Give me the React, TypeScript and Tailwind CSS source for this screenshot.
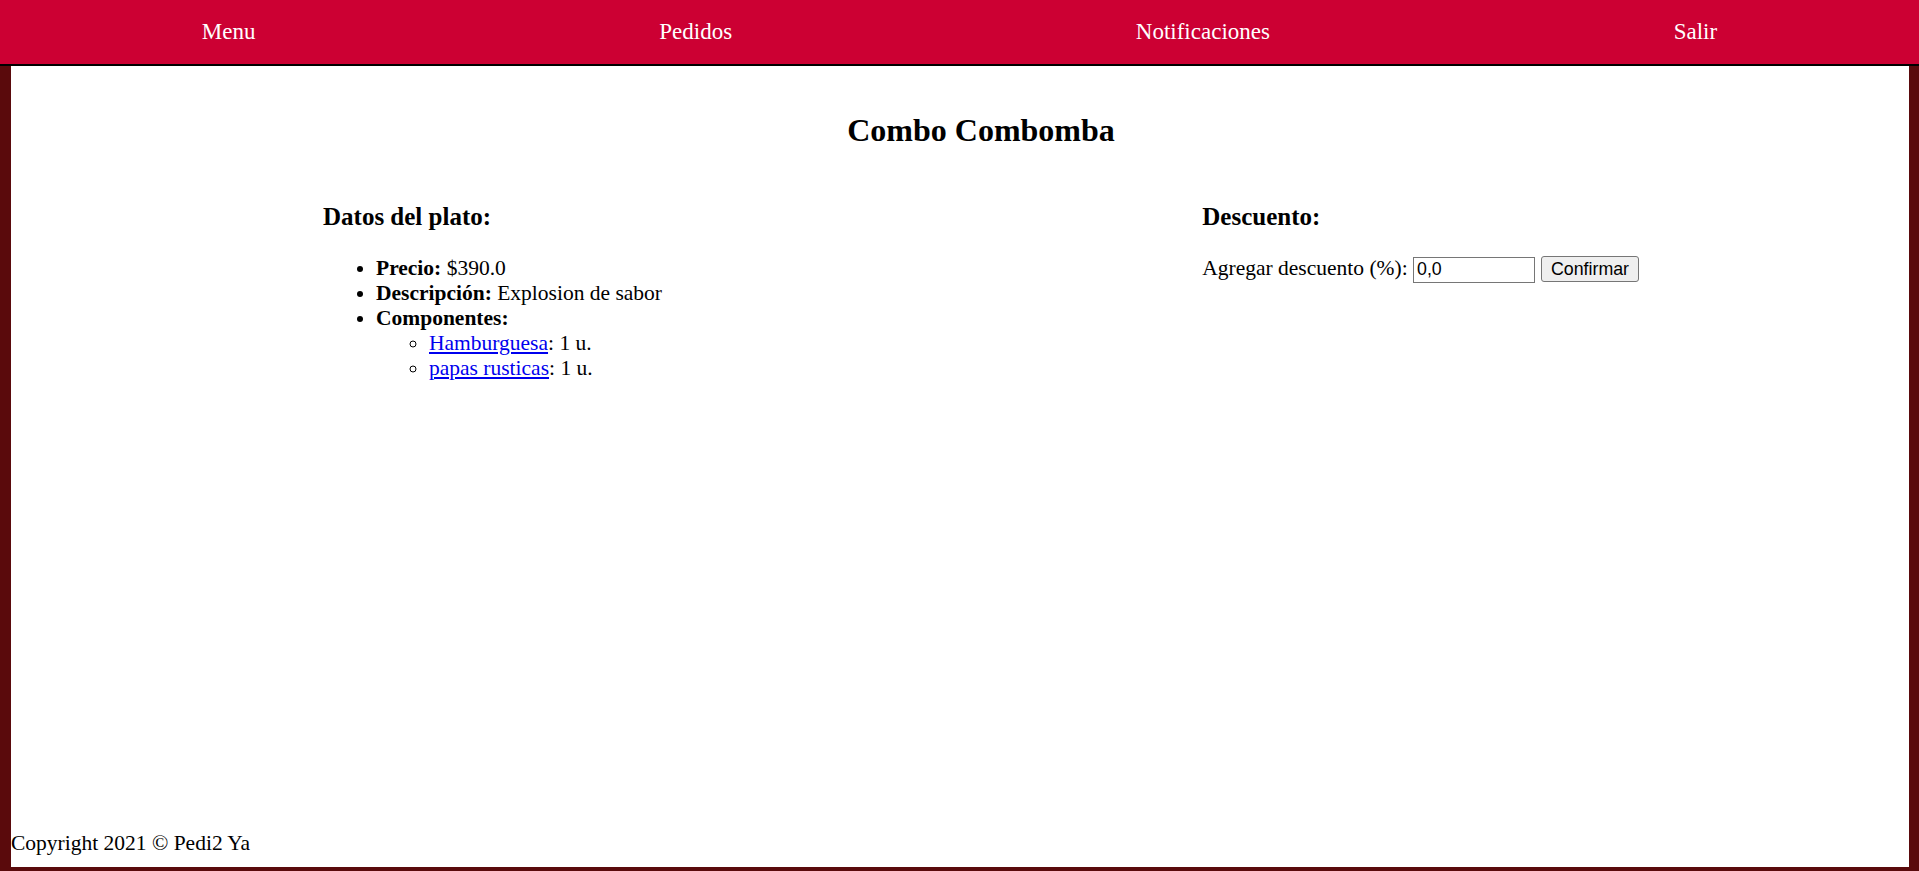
import React from "react";

const NAV_ITEMS = ["Menu", "Pedidos", "Notificaciones", "Salir"];

const COMPONENTES = [
  { name: "Hamburguesa", qty: "1 u." },
  { name: "papas rusticas", qty: "1 u." },
];

export default function App() {
  return (
    <div className="min-h-screen flex flex-col bg-[#5a0a0c] font-['Liberation_Serif','Times_New_Roman',serif] text-black">
      {/* Top navigation */}
      <nav className="h-[66px] shrink-0 flex items-center justify-around bg-[#cc0033] border-b-2 border-black">
        {NAV_ITEMS.map((item) => (
          <a key={item} href="#" className="text-[23px] text-white leading-normal">
            {item}
          </a>
        ))}
      </nav>

      {/* White content panel */}
      <div className="flex-1 flex flex-col bg-white ml-[11px] mr-[10px] mb-[4px] pb-[11px]">
        <main className="ml-[312px] w-[1316px]">
          <h2 className="mt-[46px] text-center text-[32px] font-bold leading-[37px]">Combo Combomba</h2>

          <div className="mt-[53px] flex justify-between">
            {/* Datos del plato */}
            <section>
              <h3 className="text-[25px] font-bold leading-[29px]">Datos del plato:</h3>
              <ul className="mt-[25px] list-disc pl-[53px] text-[21.5px] leading-[25px]">
                <li>
                  <b>Precio:</b> $390.0
                </li>
                <li>
                  <b>Descripción:</b> Explosion de sabor
                </li>
                <li>
                  <b>Componentes:</b>
                  <ul className="list-[circle] pl-[53px]">
                    {COMPONENTES.map((c) => (
                      <li key={c.name}>
                        <a href="#" className="text-[#0000ee] underline">
                          {c.name}
                        </a>
                        : {c.qty}
                      </li>
                    ))}
                  </ul>
                </li>
              </ul>
            </section>

            {/* Descuento */}
            <section>
              <h3 className="text-[25px] font-bold leading-[29px]">Descuento:</h3>
              <div className="mt-[25px] text-[21.5px] leading-[25px] whitespace-nowrap">
                Agregar descuento (%):{" "}
                <input
                  type="text"
                  defaultValue="0,0"
                  className="h-[26px] w-[122px] px-[3px] border border-[#767676] bg-white text-[17.8px] font-['Liberation_Sans',Arial,sans-serif] align-baseline outline-none"
                />
                <button className="ml-[6px] h-[26px] w-[98px] rounded-[3px] border border-[#767676] bg-[#efefef] text-[17.8px] font-['Liberation_Sans',Arial,sans-serif] align-baseline">
                  Confirmar
                </button>
              </div>
            </section>
          </div>
        </main>

        <footer className="mt-auto text-[21.5px] leading-[25px]">Copyright 2021 © Pedi2 Ya</footer>
      </div>
    </div>
  );
}
